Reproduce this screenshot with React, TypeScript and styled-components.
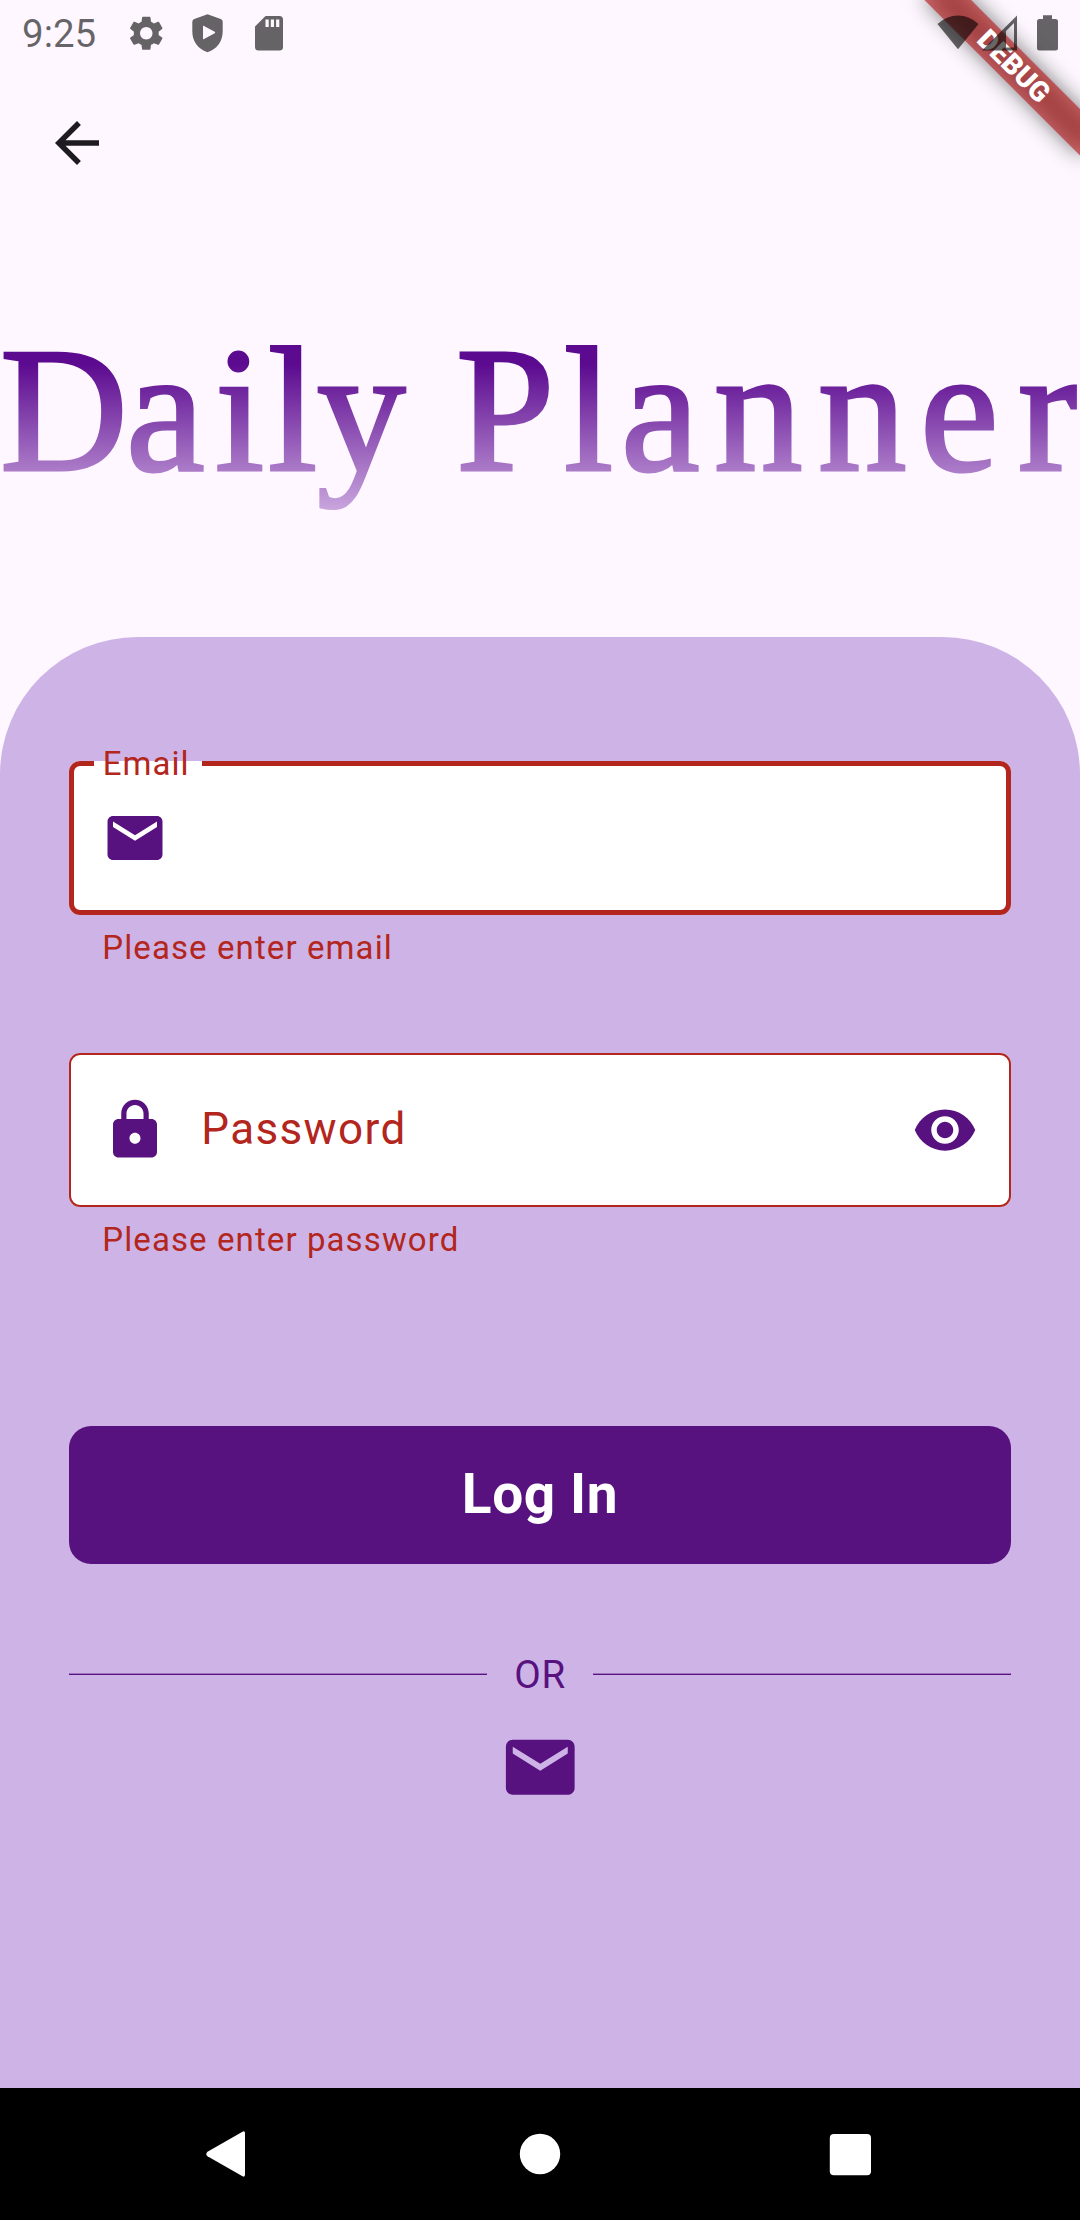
import React from "react";
import styled, { createGlobalStyle } from "styled-components";

const purple = "#581280";
const error = "#b3261e";

const GlobalStyle = createGlobalStyle`
  *, *::before, *::after { box-sizing: border-box; }
  html, body { margin: 0; padding: 0; background: #fef7ff; }
`;

const Screen = styled.div`
  position: relative;
  width: 1080px;
  height: 2220px;
  display: flex;
  flex-direction: column;
  overflow: hidden;
  background: #fef7ff;
  font-family: Roboto, "Noto Sans", sans-serif;
`;

const StatusBar = styled.header`
  position: relative;
  z-index: 2;
  display: flex;
  justify-content: space-between;
  height: 66px;
  padding: 0 22px;
  color: rgba(0, 0, 0, 0.6);
`;

const StatusGroup = styled.div`
  display: flex;
  align-items: center;
`;

const Clock = styled.span`
  width: 103px;
  font-size: 38.5px;
  line-height: 66px;
  padding-top: 2px;
`;

const StatusIcon = styled.svg<{ $w: number; $gap?: number }>`
  display: block;
  flex: none;
  width: ${(p) => p.$w}px;
  height: 66px;
  margin-left: ${(p) => p.$gap ?? 0}px;
  fill: currentColor;
`;

const Ribbon = styled.div`
  position: absolute;
  z-index: 1;
  left: 1080px;
  top: 0;
  width: 0;
  height: 0;
  transform: rotate(45deg);
`;

const RibbonShadow = styled.div`
  position: absolute;
  left: -110px;
  top: 77px;
  width: 220px;
  height: 33px;
  background: rgba(0, 0, 0, 0.5);
  filter: blur(10.9px);
`;

const RibbonBand = styled.div`
  position: absolute;
  left: -110px;
  top: 77px;
  width: 220px;
  height: 33px;
  background: rgba(183, 28, 28, 0.627);
  color: #fff;
  font-size: 28px;
  font-weight: 900;
  line-height: 33px;
  text-align: center;
`;

const AppBar = styled.nav`
  display: flex;
  align-items: center;
  height: 154px;
  padding-left: 44px;
`;

const BackButton = styled.button`
  display: flex;
  padding: 0;
  border: 0;
  background: none;
  color: #1d1b20;
`;

const Icon = styled.svg<{ $size: number }>`
  display: block;
  flex: none;
  width: ${(p) => p.$size}px;
  height: ${(p) => p.$size}px;
  fill: currentColor;
`;

const Brand = styled.div`
  height: 417.3px;
  padding-top: 124px;
`;

const Wordmark = styled.svg`
  display: block;
  width: 1080px;
  height: 176px;
  overflow: visible;
  font-family: "Liberation Serif", serif;
  font-size: 177px;
`;

const Panel = styled.main`
  flex: 1;
  display: flex;
  flex-direction: column;
  padding: 124px 68.75px 0;
  border-radius: 137.5px 137.5px 0 0;
  background: #ceb4e6;
`;

const FieldGroup = styled.div`
  height: 292px;
`;

const FieldBox = styled.div<{ $focused?: boolean }>`
  position: relative;
  display: flex;
  align-items: center;
  height: 154px;
  padding: 0 33px;
  border-radius: 11px;
  background: #fff;
  color: ${purple};

  &::before {
    content: "";
    position: absolute;
    inset: 0;
    border: ${(p) => (p.$focused ? "5.5px" : "2.75px")} solid ${error};
    border-radius: inherit;
  }
`;

const Placeholder = styled.span`
  flex: 1;
  margin: 0 0 2px 33.5px;
  color: ${error};
  font-size: 44px;
  line-height: 60px;
  letter-spacing: 1.375px;
`;

const FloatingLabel = styled.label`
  position: absolute;
  left: 25px;
  top: -18px;
  width: 108.5px;
  height: 42px;
  padding-left: 9px;
  background: linear-gradient(transparent 18px, #fff 18px);
  color: ${error};
  font-size: 33px;
  line-height: 42px;
  letter-spacing: 1.03px;
`;

const ErrorText = styled.p`
  margin: 11px 0 0 33.5px;
  color: ${error};
  font-size: 33px;
  line-height: 44px;
  letter-spacing: 1.1px;
`;

const LoginButton = styled.button`
  height: 137.5px;
  margin-top: 81px;
  padding: 0 0 2px;
  border: 0;
  border-radius: 22px;
  background: ${purple};
  color: #fff;
  font-family: inherit;
  font-size: 55px;
  font-weight: 700;
  letter-spacing: 0.6px;
`;

const Divider = styled.div`
  display: flex;
  align-items: center;
  gap: 27.5px;
  height: 52px;
  margin-top: 84.5px;
  color: ${purple};
  font-size: 38.5px;
  letter-spacing: 0.69px;

  &::before,
  &::after {
    content: "";
    flex: 1;
    height: 2px;
    background: linear-gradient(rgba(88, 18, 128, 0.4) 50%, ${purple} 50%);
  }
`;

const MailButton = styled.button`
  align-self: center;
  display: flex;
  margin-top: 26px;
  padding: 0;
  border: 0;
  background: none;
  color: ${purple};
`;

const NavBar = styled.footer`
  display: grid;
  grid-template-columns: 310px 310px 310px;
  justify-content: center;
  justify-items: center;
  align-items: center;
  height: 132px;
  background: #000;
`;

const NavIcon = styled.svg`
  display: block;
  width: 60px;
  height: 60px;
  fill: #fff;
`;

const MailIcon = ({ size }: { size: number }) => (
  <Icon $size={size} viewBox="0 0 24 24">
    <path d="M20 4H4c-1.1 0-1.99.9-1.99 2L2 18c0 1.1.9 2 2 2h16c1.1 0 2-.9 2-2V6c0-1.1-.9-2-2-2zm0 4l-8 5-8-5V6l8 5 8-5v2z" />
  </Icon>
);

const LockIcon = () => (
  <Icon $size={66} viewBox="0 0 24 24">
    <path d="M18 8h-1V6c0-2.76-2.24-5-5-5S7 3.24 7 6v2H6c-1.1 0-2 .9-2 2v10c0 1.1.9 2 2 2h12c1.1 0 2-.9 2-2V10c0-1.1-.9-2-2-2zm-6 9c-1.1 0-2-.9-2-2s.9-2 2-2 2 .9 2 2-.9 2-2 2zm3.1-9H8.9V6c0-1.71 1.39-3.1 3.1-3.1s3.1 1.39 3.1 3.1v2z" />
  </Icon>
);

const EyeIcon = () => (
  <Icon $size={66} viewBox="0 0 24 24">
    <path d="M12 4.5C7 4.5 2.73 7.61 1 12c1.73 4.39 6 7.5 11 7.5s9.27-3.11 11-7.5c-1.73-4.39-6-7.5-11-7.5zM12 17c-2.76 0-5-2.24-5-5s2.24-5 5-5 5 2.24 5 5-2.24 5-5 5zm0-8c-1.66 0-3 1.34-3 3s1.34 3 3 3 3-1.34 3-3-1.34-3-3-3z" />
  </Icon>
);

const ArrowIcon = () => (
  <Icon $size={66} viewBox="0 0 24 24">
    <path d="M20 11H7.83l5.59-5.59L12 4l-8 8 8 8 1.41-1.41L7.83 13H20v-2z" />
  </Icon>
);

export default function App() {
  return (
    <Screen>
      <GlobalStyle />
      <StatusBar>
        <StatusGroup>
          <Clock>9:25</Clock>
          <StatusIcon $w={42} viewBox="0 0 42 66">
            <path
              transform="translate(0.5 12.5) scale(1.73)"
              d="M19.14 12.94c.04-.3.06-.61.06-.94 0-.32-.02-.64-.07-.94l2.03-1.58c.18-.14.23-.41.12-.61l-1.92-3.32c-.12-.22-.37-.29-.59-.22l-2.39.96c-.5-.38-1.03-.7-1.62-.94l-.36-2.54c-.04-.24-.24-.41-.48-.41h-3.84c-.24 0-.43.17-.47.41l-.36 2.54c-.59.24-1.13.57-1.62.94l-2.39-.96c-.22-.08-.47 0-.59.22L2.74 8.87c-.12.21-.08.47.12.61l2.03 1.58c-.05.3-.09.63-.09.94s.02.64.07.94l-2.03 1.58c-.18.14-.23.41-.12.61l1.92 3.32c.12.22.37.29.59.22l2.39-.96c.5.38 1.03.7 1.62.94l.36 2.54c.05.24.24.41.48.41h3.84c.24 0 .44-.17.47-.41l.36-2.54c.59-.24 1.13-.56 1.62-.94l2.39.96c.22.08.47 0 .59-.22l1.92-3.32c.12-.22.07-.47-.12-.61l-2.01-1.58zM12 15.6c-1.98 0-3.6-1.62-3.6-3.6s1.62-3.6 3.6-3.6 3.6 1.62 3.6 3.6-1.62 3.6-3.6 3.6z"
            />
          </StatusIcon>
          <StatusIcon $w={31} $gap={25} viewBox="0 0 31 66">
            <path
              fillRule="evenodd"
              d="M15.5 14.3 28.7 19Q30.7 19.7 30.7 22V31Q30.7 46.5 15.5 52.3Q.3 46.5 .3 31V22Q.3 19.7 2.3 19ZM11 26.5v12q0 1.2 1 .6L22.7 33.2q1-.7 0-1.4L12 25.9q-1-.5-1 .6Z"
            />
          </StatusIcon>
          <StatusIcon $w={28} $gap={31.5} viewBox="0 0 28 66">
            <path
              fillRule="evenodd"
              d="M10.5 16H24.500Q28 16 28 19.500V47Q28 50.500 24.500 50.500H3.500Q0 50.500 0 47V26.500ZM10.500 19.500V27H13.700V19.500ZM15.800 19.500V27H19V19.500ZM21.100 19.500V27H24.300V19.500Z"
            />
          </StatusIcon>
        </StatusGroup>
        <StatusGroup>
          <StatusIcon $w={42} viewBox="0 0 42 66">
            <path d="M.5 24Q9.500 15.500 21 15.500T41.500 24L21 49.300Z" />
          </StatusIcon>
          <StatusIcon $w={35} $gap={2.5} viewBox="0 0 35 66">
            <path fillRule="evenodd" d="M0 50.500 35 15.500V50.500ZM24 31V47.500H32V23Z" />
          </StatusIcon>
          <StatusIcon $w={21} $gap={20.5} viewBox="0 0 21 66">
            <path d="M6 15.200H15V19H18.500Q21 19 21 21.500V48Q21 50.500 18.500 50.500H2.500Q0 50.500 0 48V21.500Q0 19 2.500 19H6Z" />
          </StatusIcon>
        </StatusGroup>
      </StatusBar>
      <Ribbon>
        <RibbonShadow />
        <RibbonBand>DEBUG</RibbonBand>
      </Ribbon>

      <AppBar>
        <BackButton aria-label="Back">
          <ArrowIcon />
        </BackButton>
      </AppBar>

      <Brand>
        <Wordmark viewBox="0 0 1080 176">
          <defs>
            <linearGradient id="ink" gradientUnits="userSpaceOnUse" x1="0" y1="20" x2="0" y2="170">
              <stop offset="0" stopColor="#5c0a90" />
              <stop offset="1" stopColor="#cba9df" />
            </linearGradient>
          </defs>
          <text
            y="125.500"
            x="0 126 215 268 317 410 456 564 621 714 818 920 1018"
            fill="url(#ink)"
            stroke="url(#ink)"
            strokeWidth="3"
          >
            Daily Planner
          </text>
        </Wordmark>
      </Brand>

      <Panel>
        <FieldGroup>
          <FieldBox $focused>
            <FloatingLabel>Email</FloatingLabel>
            <MailIcon size={66} />
          </FieldBox>
          <ErrorText>Please enter email</ErrorText>
        </FieldGroup>
        <FieldGroup>
          <FieldBox>
            <LockIcon />
            <Placeholder>Password</Placeholder>
            <EyeIcon />
          </FieldBox>
          <ErrorText>Please enter password</ErrorText>
        </FieldGroup>
        <LoginButton>Log In</LoginButton>
        <Divider>OR</Divider>
        <MailButton aria-label="Continue with email">
          <MailIcon size={82.5} />
        </MailButton>
      </Panel>

      <NavBar>
        <NavIcon viewBox="0 0 60 60">
          <path d="M42.500 7.700Q45 6.500 45 9V50.500Q45 53.500 42.500 52.300L7.500 32.300Q5 30 7.500 27.700Z" />
        </NavIcon>
        <NavIcon viewBox="0 0 60 60">
          <circle cx="30" cy="30" r="20.200" />
        </NavIcon>
        <NavIcon viewBox="0 0 60 60">
          <rect x="9.800" y="10" width="41.200" height="41.200" rx="4" />
        </NavIcon>
      </NavBar>
    </Screen>
  );
}
